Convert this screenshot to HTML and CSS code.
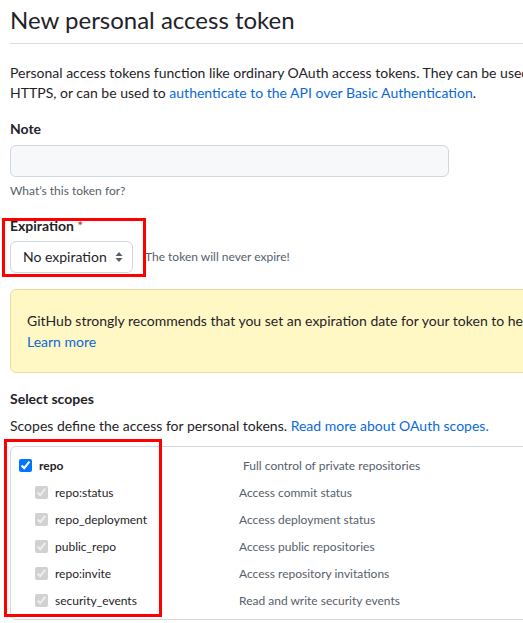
FILE: index.html
```html
<!DOCTYPE html>
<html lang="en">
<head>
<meta charset="utf-8">
<title>New personal access token</title>
<link rel="stylesheet" href="styles.css">
</head>
<body>
<div class="page">
  <h1 class="title">New personal access token</h1>
  <p class="intro">Personal access tokens function like ordinary OAuth access tokens. They can be used instead of a password for Git over<br>HTTPS, or can be used to <a href="#">authenticate to the API over Basic Authentication</a>.</p>

  <div class="field">
    <div class="label">Note</div>
    <div class="input"></div>
    <div class="hint">What’s this token for?</div>
  </div>

  <div class="field field-exp">
    <div class="label">Expiration <span class="req">*</span></div>
    <div class="exp-row">
      <div class="select">
        <span>No expiration</span>
        <svg class="arrows" width="8" height="12" viewBox="0 0 8 12"><path d="M0.5 5 L4 1 L7.5 5 Z M0.5 7 L7.5 7 L4 11 Z" fill="#57606a"/></svg>
      </div>
      <span class="exp-note">The token will never expire!</span>
    </div>
  </div>

  <div class="flash">
    <div>GitHub strongly recommends that you set an expiration date for your token to help keep your information secure.</div>
    <a href="#">Learn more</a>
  </div>

  <div class="label section">Select scopes</div>
  <p class="scopes-desc">Scopes define the access for personal tokens. <a href="#">Read more about OAuth scopes.</a></p>

  <div class="scopes">
    <div class="scope-row parent">
      <label class="scope-label"><input type="checkbox" checked> <span>repo</span></label>
      <span class="desc">Full control of private repositories</span>
    </div>
    <div class="scope-row child">
      <label class="scope-label"><input type="checkbox" checked disabled> <span>repo:status</span></label>
      <span class="desc">Access commit status</span>
    </div>
    <div class="scope-row child">
      <label class="scope-label"><input type="checkbox" checked disabled> <span>repo_deployment</span></label>
      <span class="desc">Access deployment status</span>
    </div>
    <div class="scope-row child">
      <label class="scope-label"><input type="checkbox" checked disabled> <span>public_repo</span></label>
      <span class="desc">Access public repositories</span>
    </div>
    <div class="scope-row child">
      <label class="scope-label"><input type="checkbox" checked disabled> <span>repo:invite</span></label>
      <span class="desc">Access repository invitations</span>
    </div>
    <div class="scope-row child">
      <label class="scope-label"><input type="checkbox" checked disabled> <span>security_events</span></label>
      <span class="desc">Read and write security events</span>
    </div>
  </div>

  <div class="mark mark-exp"></div>
  <div class="mark mark-scopes"></div>
</div>
</body>
</html>
```

FILE: styles.css
```css
html, body {
  margin: 0;
  padding: 0;
  background: #ffffff;
  overflow: hidden;
}

body {
  font-family: "Lato", "Noto Sans", "Liberation Sans", sans-serif;
  font-size: 14px;
  line-height: 20px;
  color: #1f2328;
}

a {
  color: #0969da;
  text-decoration: none;
}

.page {
  position: relative;
  width: 900px;
  padding-left: 10px;
}

.title {
  margin: 2px 0 0;
  padding-bottom: 5px;
  font-size: 24px;
  line-height: 36px;
  font-weight: 400;
  border-bottom: 1px solid #d8dee4;
}

.intro {
  margin: 19px 0 0;
  white-space: nowrap;
}

.field {
  margin-top: 16px;
}

.label {
  font-weight: 700;
  font-size: 14px;
  line-height: 20px;
}

.req {
  color: #cf222e;
  font-weight: 400;
}

.input {
  margin-top: 6px;
  width: 439px;
  height: 32px;
  box-sizing: border-box;
  background: #f6f8fa;
  border: 1px solid #d0d7de;
  border-radius: 6px;
}

.hint {
  margin-top: 5px;
  font-size: 12px;
  line-height: 18px;
  color: #57606a;
}

.exp-row {
  margin-top: 5px;
  display: flex;
  align-items: center;
  gap: 12px;
}

.select {
  width: 123px;
  height: 32px;
  box-sizing: border-box;
  border: 1px solid #d0d7de;
  border-radius: 6px;
  background: #ffffff;
  display: flex;
  align-items: center;
  justify-content: space-between;
  padding: 0 9px 0 12px;
  font-size: 14px;
}

.arrows {
  display: block;
}

.exp-note {
  font-size: 12px;
  color: #57606a;
}

.flash {
  margin-top: 16px;
  background: #fff8c5;
  border: 1px solid #eedc9e;
  border-radius: 6px;
  padding: 20px 16px;
  line-height: 21px;
  white-space: nowrap;
}

.section {
  margin-top: 16px;
}

.scopes-desc {
  margin: 7px 0 0;
  white-space: nowrap;
}

.scopes {
  margin-top: 10px;
  border: 1px solid #d0d7de;
  border-radius: 6px;
  padding: 5px 0;
}

.scope-row {
  display: flex;
  align-items: center;
  height: 27px;
}

.scope-label {
  display: flex;
  align-items: center;
  gap: 7px;
  width: 228px;
  box-sizing: border-box;
  padding-left: 8px;
  font-size: 12px;
  color: #1f2328;
}

.scope-label input {
  margin: 0;
  width: 13px;
  height: 13px;
}

.parent .scope-label span {
  font-weight: 700;
}

.child .scope-label {
  padding-left: 24px;
}

.desc {
  font-size: 12px;
  color: #57606a;
}

.parent .desc {
  padding-left: 4px;
}

.mark {
  position: absolute;
  box-sizing: border-box;
  border: 3px solid #ff0000;
}

.mark-exp {
  left: 2px;
  top: 216px;
  width: 144px;
  height: 59px;
}

.mark-scopes {
  left: 4px;
  top: 437px;
  width: 158px;
  height: 178px;
}
```
